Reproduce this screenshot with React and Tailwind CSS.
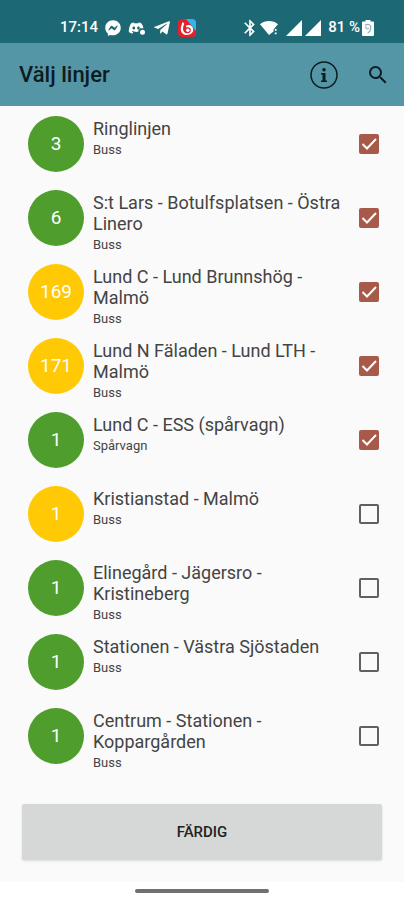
import React, { useState } from 'react'
import { FaFacebookMessenger, FaTelegramPlane } from 'react-icons/fa'
import { MdBluetooth, MdSearch } from 'react-icons/md'

const initialLines = [
  { id: 1, number: '3', name: 'Ringlinjen', type: 'Buss', color: 'green', checked: true },
  { id: 2, number: '6', name: 'S:t Lars - Botulfsplatsen - Östra Linero', type: 'Buss', color: 'green', checked: true },
  { id: 3, number: '169', name: 'Lund C - Lund Brunnshög - Malmö', type: 'Buss', color: 'yellow', checked: true },
  { id: 4, number: '171', name: 'Lund N Fäladen - Lund LTH - Malmö', type: 'Buss', color: 'yellow', checked: true },
  { id: 5, number: '1', name: 'Lund C - ESS (spårvagn)', type: 'Spårvagn', color: 'green', checked: true },
  { id: 6, number: '1', name: 'Kristianstad - Malmö', type: 'Buss', color: 'yellow', checked: false },
  { id: 7, number: '1', name: 'Elinegård - Jägersro - Kristineberg', type: 'Buss', color: 'green', checked: false },
  { id: 8, number: '1', name: 'Stationen - Västra Sjöstaden', type: 'Buss', color: 'green', checked: false },
  { id: 9, number: '1', name: 'Centrum - Stationen - Koppargården', type: 'Buss', color: 'green', checked: false },
]

function SignalIcon() {
  return (
    <svg className="w-4 h-4" viewBox="0 0 16 16" fill="currentColor">
      <path d="M16 0v16H0z" />
    </svg>
  )
}

function DiscordIcon() {
  return (
    <svg className="w-[18px] h-4" viewBox="0 0 17 16" fill="currentColor">
      <path d="M5.500 2.500c-1 .1-2 .5-3 1C1 6 .2 8.600.3 12c1.100.9 2.200 1.400 3.500 1.700l.9-1.500-1.300-.7.3-.4c2.200.9 4.500 1 6.300.5V10c0-1 .7-1.700 1.700-1.700H15C14.700 6.500 14 5 13 3.500c-.9-.5-1.900-.9-3-1l-.5 1c-1.200-.2-2.200-.2-3.500 0zM5.300 6.500c.8 0 1.400.7 1.400 1.500s-.6 1.500-1.400 1.500S3.900 8.800 3.900 8s.6-1.500 1.400-1.500zm4.700 0c.8 0 1.400.7 1.400 1.500S10.800 9.500 10 9.500 8.600 8.800 8.600 8s.6-1.500 1.400-1.500z" />
      <circle cx="14" cy="12.300" r="2.500" />
    </svg>
  )
}

function WifiIcon() {
  return (
    <svg className="w-[18px] h-4" viewBox="0 0 18 16" fill="currentColor">
      <path d="M0 4.200C5-.2 13-.2 18 4.200L13.500 9.500v2L9 15z" />
      <path d="M14.800 9h1.800v1.800h-1.800zM14.800 12.500h1.800v1.800h-1.800z" />
    </svg>
  )
}

function BatteryIcon() {
  return (
    <svg className="w-3 h-4" viewBox="0 0 12 16">
      <path fill="currentColor" d="M3.500 0h5v1.500H11a1 1 0 0 1 1 1V15a1 1 0 0 1-1 1H1a1 1 0 0 1-1-1V2.500a1 1 0 0 1 1-1h2.500z" />
      <path fill="none" stroke="#8fb0b6" strokeWidth="1.200" d="M3.200 5.500C4.500 4 8.500 4 8.700 6.500c.2 2.500-1 5.500-3 6.500M3.500 6.500c0 2.500 2.500 3 3.500 1.500" />
    </svg>
  )
}

function FlameAppIcon() {
  return (
    <svg className="w-[18px] h-[18px]" viewBox="0 0 18 18">
      <rect width="18" height="18" rx="4" fill="#e3202b" />
      <path d="M8 0h6a4 4 0 0 1 4 4v8z" fill="#35b4ea" />
      <path d="M4.500 3C3.800 6 2.500 8 2.800 11c.4 3 3 5 6.200 5s6.200-2 6.200-5.200c0-3-2.500-5-5.200-4.800-1.300.1-2.300.6-3 1.300C6.800 5.500 6 4 4.500 3z" fill="#fff" />
      <path d="M6.500 4.500c-1.800 3.500-2.700 8.500 2 9.800 3 .4 4.700-1.600 4.300-3.800-.5-2-2.500-2.800-4.100-2C8 7.500 7.200 6 6.500 4.500z" fill="#e3202b" />
      <circle cx="9.800" cy="11.300" r="1.700" fill="#fff" />
    </svg>
  )
}

function InfoIcon() {
  return (
    <svg className="w-7 h-7" viewBox="0 0 28 28" fill="currentColor">
      <circle cx="14" cy="14" r="13" fill="none" stroke="currentColor" strokeWidth="1.500" />
      <circle cx="14" cy="8.800" r="1.800" />
      <path d="M11 12h4.500v7.500H17V21h-6v-1.500h1.500v-6H11z" />
    </svg>
  )
}

function StatusBar() {
  return (
    <div className="flex items-center justify-between h-[43px] pt-3 pl-[60px] pr-[30px] bg-[#1c6875] text-white">
      <div className="flex items-center gap-[7px]">
        <span className="text-[15px] font-medium">17:14</span>
        <FaFacebookMessenger className="w-4 h-4" />
        <DiscordIcon />
        <FaTelegramPlane className="w-[18px] h-[18px]" />
        <FlameAppIcon />
      </div>
      <div className="flex items-center">
        <MdBluetooth className="w-5 h-5" />
        <WifiIcon />
        <span className="flex gap-[3px] ml-2 mr-[7px]">
          <SignalIcon />
          <SignalIcon />
        </span>
        <span className="text-[15px] font-medium mr-0.5">81 %</span>
        <BatteryIcon />
      </div>
    </div>
  )
}

function LineRow({ line, onToggle }) {
  return (
    <li>
      <label className="flex items-start gap-[9px] min-h-[74px] cursor-pointer">
        <span
          className={`flex items-center justify-center shrink-0 w-14 h-14 rounded-full text-white text-[19px] ${
            line.color === 'green' ? 'bg-[#4e9d2d]' : 'bg-[#ffc905]'
          }`}
        >
          {line.number}
        </span>
        <span className="flex-1 min-w-0 pt-0.5 text-[#444]">
          <span className="block text-lg leading-[21px]">{line.name}</span>
          <span className="block text-[13px] leading-[22px]">{line.type}</span>
        </span>
        <span className="relative flex items-center justify-center shrink-0 w-5 h-14">
          <input
            type="checkbox"
            checked={line.checked}
            onChange={() => onToggle(line.id)}
            className="peer appearance-none w-5 h-5 rounded-xs border-2 border-[#606060] checked:bg-[#a75a4a] checked:border-[#a75a4a]"
          />
          <svg
            className="absolute w-5 h-5 text-white opacity-0 peer-checked:opacity-100 pointer-events-none"
            viewBox="0 0 20 20"
            fill="none"
            stroke="currentColor"
            strokeWidth="2"
          >
            <path d="M3.500 10l4.500 4.500L17 5" />
          </svg>
        </span>
      </label>
    </li>
  )
}

function App() {
  const [lines, setLines] = useState(initialLines)

  function toggleLine(id) {
    setLines(lines.map((line) => (line.id === id ? { ...line, checked: !line.checked } : line)))
  }

  return (
    <div className="flex flex-col min-h-screen bg-[#fafafa] font-[Roboto,sans-serif]">
      <StatusBar />

      <header className="flex items-center h-[63px] pl-[19px] pr-[14px] bg-[#5596a6] text-[#0c1c22]">
        <h1 className="flex-1 text-[22px] font-medium">Välj linjer</h1>
        <button type="button" aria-label="Information" className="mr-7">
          <InfoIcon />
        </button>
        <button type="button" aria-label="Sök">
          <MdSearch className="w-6 h-6" />
        </button>
      </header>

      <main className="flex-1 pt-[10px]">
        <ul className="pl-7 pr-[25px]">
          {lines.map((line) => (
            <LineRow key={line.id} line={line} onToggle={toggleLine} />
          ))}
        </ul>
        <div className="px-[22px] pt-[22px] pb-[22px]">
          <button
            type="button"
            className="block w-full h-14 rounded-xs bg-[#d6d8d7] shadow text-[15px] font-medium text-[#222]"
          >
            FÄRDIG
          </button>
        </div>
      </main>

      <footer className="flex justify-center pt-[7px] pb-[7px] bg-white">
        <div className="w-1/3 h-1 rounded-full bg-[#707070]" />
      </footer>
    </div>
  )
}

export default App
